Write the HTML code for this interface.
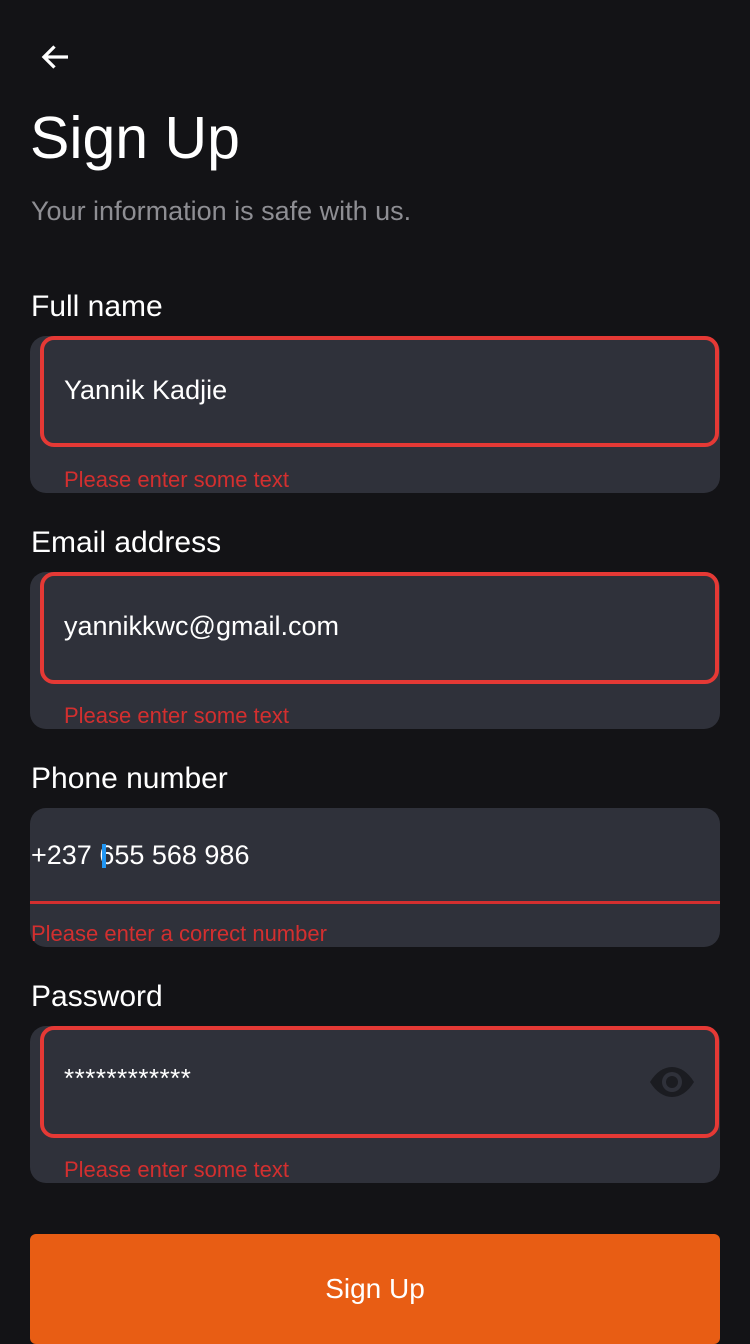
<!DOCTYPE html>
<html><head><meta charset="utf-8"><style>
body{margin:0;width:750px;height:1334px;background:#131316;font-family:"Liberation Sans",sans-serif;color:#fff;position:relative;overflow:hidden}
.a{position:absolute}
.lbl{position:absolute;left:31px;font-size:30px;line-height:36px}
.box{position:absolute;left:30px;width:690px;background:#2f313a;border-radius:16px}
.in{position:absolute;left:40px;width:671px;height:104px;border:4px solid #e53935;border-radius:14px;background:#2f313a;box-sizing:content-box}
.val{position:absolute;left:64px;font-size:27px;line-height:32px}
.err{position:absolute;left:64px;font-size:22px;line-height:26px;color:#d32f2f}
</style></head><body>
<svg class="a" style="left:38px;top:39px" width="36" height="36" viewBox="0 0 24 24"><path d="M20 12H5M11 5l-7 7 7 7" stroke="#fff" stroke-width="2.2" fill="none"/></svg>
<div class="a" style="left:30px;top:104px;font-size:59px;line-height:68px">Sign Up</div>
<div class="a" style="left:31px;top:195px;font-size:27px;line-height:32px;color:#8e8e93">Your information is safe with us.</div>

<div class="lbl" style="top:289px">Full name</div>
<div class="box" style="top:336px;height:157px"></div>
<div class="in" style="top:336px;height:103px"></div>
<div class="val" style="top:374px">Yannik Kadjie</div>
<div class="err" style="top:467px">Please enter some text</div>

<div class="lbl" style="top:525px">Email address</div>
<div class="box" style="top:572px;height:157px"></div>
<div class="in" style="top:572px;height:104px"></div>
<div class="val" style="top:610px">yannikkwc@gmail.com</div>
<div class="err" style="top:703px">Please enter some text</div>

<div class="lbl" style="top:761px">Phone number</div>
<div class="box" style="top:808px;height:139px"></div>
<div class="a" style="left:30px;top:901px;width:690px;height:3px;background:#d32f2f"></div>
<div class="val" style="left:31px;top:839px">+237 655 568 986</div>
<div class="a" style="left:102px;top:844px;width:4px;height:24px;background:#2196f3"></div>
<div class="err" style="left:31px;top:921px">Please enter a correct number</div>

<div class="lbl" style="top:979px">Password</div>
<div class="box" style="top:1026px;height:157px"></div>
<div class="in" style="top:1026px;height:104px"></div>
<div class="val" style="top:1062px;font-size:26px;letter-spacing:0.5px">************</div>
<svg class="a" style="left:650px;top:1062px" width="44" height="40" viewBox="0 0 44 40"><path d="M0 20C6 10 14 5 22 5S38 10 44 20C38 30 30 35 22 35S6 30 0 20Z" fill="#1b1c21"/><circle cx="22" cy="20" r="10" fill="#2f313a"/><circle cx="22" cy="20" r="6" fill="#1b1c21"/></svg>
<div class="err" style="top:1157px">Please enter some text</div>

<div class="a" style="left:30px;top:1234px;width:690px;height:110px;background:#e85d14;border-radius:6px"></div>
<div class="a" style="left:30px;top:1272px;width:690px;text-align:center;font-size:28px;line-height:34px">Sign Up</div>
</body></html>
